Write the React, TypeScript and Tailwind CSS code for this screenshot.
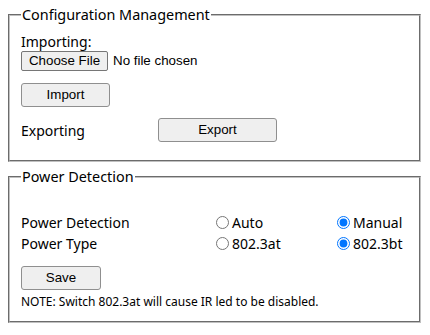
import { useState } from 'react'

const btn =
  "h-[24px] rounded-[3px] border border-[#8f8f8f] bg-[#efefef] text-[13.33px] text-black font-['Liberation_Sans',Arial,sans-serif] hover:bg-[#e5e5e5]"

function Radio({ name, label, checked, onChange }: { name: string; label: string; checked: boolean; onChange: () => void }) {
  return (
    <label className="flex items-center gap-[3px] cursor-pointer">
      <input
        type="radio"
        name={name}
        checked={checked}
        onChange={onChange}
        className="m-0 h-[13px] w-[13px] accent-[#0075ff]"
      />
      <span>{label}</span>
    </label>
  )
}

export default function App() {
  const [detection, setDetection] = useState('manual')
  const [powerType, setPowerType] = useState('bt')

  return (
    <div className="ml-[8px] w-[413px] pt-[4px] text-black font-['Noto_Sans',sans-serif] text-[14px]">
      {/* Configuration Management */}
      <fieldset className="border-2 [border-style:groove] border-[#c0c0c0] px-[11px] pt-[5px] pb-[18px]">
        <legend className="px-[1px] text-[14.4px] leading-[22px]">Configuration Management</legend>
        <div className="h-[20px] flex items-center">Importing:</div>
        <div className="h-[20px] flex items-center gap-[5px] font-['Liberation_Sans',Arial,sans-serif] text-[13.33px]">
          <label className="h-[20px] w-[87px] flex items-center justify-center rounded-[2px] border border-[#767676] bg-[#efefef] cursor-pointer">
            Choose File
            <input type="file" className="hidden" />
          </label>
          <span>No file chosen</span>
        </div>
        <button className={`${btn} mt-[12px] w-[89px]`}>Import</button>
        <div className="mt-[11px] h-[24px] flex items-center">
          <span className="w-[137px]">Exporting</span>
          <button className={`${btn} w-[119px]`}>Export</button>
        </div>
      </fieldset>

      {/* Power Detection */}
      <fieldset className="mt-[4px] border-2 [border-style:groove] border-[#c0c0c0] px-[11px] pt-[24px] pb-[10px]">
        <legend className="px-[1px] text-[14.4px] leading-[22px]">Power Detection</legend>
        <div className="grid grid-cols-[195px_121px_1fr]">
          <div className="h-[21px] flex items-center">Power Detection</div>
          <div className="h-[21px] flex items-center">
            <Radio name="det" label="Auto" checked={detection === 'auto'} onChange={() => setDetection('auto')} />
          </div>
          <div className="h-[21px] flex items-center">
            <Radio name="det" label="Manual" checked={detection === 'manual'} onChange={() => setDetection('manual')} />
          </div>
          <div className="h-[21px] flex items-center">Power Type</div>
          <div className="h-[21px] flex items-center">
            <Radio name="type" label="802.3at" checked={powerType === 'at'} onChange={() => setPowerType('at')} />
          </div>
          <div className="h-[21px] flex items-center">
            <Radio name="type" label="802.3bt" checked={powerType === 'bt'} onChange={() => setPowerType('bt')} />
          </div>
        </div>
        <button className={`${btn} mt-[12px] w-[80px]`}>Save</button>
        <div className="mt-[3px] h-[18px] flex items-center text-[12px]">
          NOTE: Switch 802.3at will cause IR led to be disabled.
        </div>
      </fieldset>
    </div>
  )
}
